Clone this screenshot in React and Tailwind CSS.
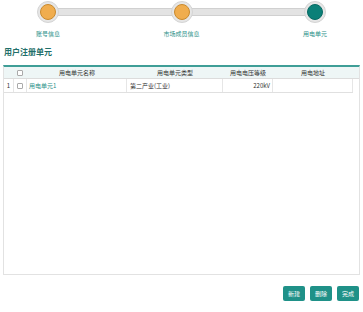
import React from 'react'

const steps = [
  { label: '账号信息', done: true },
  { label: '市场成员信息', done: true },
  { label: '用电单元', done: false },
]

const StepDot = ({ done }) => (
  <div className="w-[22px] h-[22px] rounded-full bg-[#e6e6e6] border border-[#d4d4d4] flex items-center justify-center">
    <div
      className={
        done
          ? 'w-[16px] h-[16px] rounded-full bg-[#f0ad4e] border border-[#c98a2e]'
          : 'w-[16px] h-[16px] rounded-full bg-[#0b8078] border border-[#086a63]'
      }
    />
  </div>
)

const App = () => {
  return (
    <div className="w-[363px] h-[312px] bg-white relative" style={{ fontFamily: '"Noto Sans CJK SC", "Liberation Sans", sans-serif' }}>
      {/* steps */}
      <div className="relative h-[44px]">
        <div className="absolute left-[48px] right-[50px] top-[8px] h-[8px] bg-[#e3e3e3] border-y border-[#d0d0d0]" />
        <div className="relative flex justify-between px-[27px] pt-[1px]">
          {steps.map((s) => (
            <div key={s.label} className="flex flex-col items-center w-[42px]">
              <StepDot done={s.done} />
              <div className="mt-[8px] text-[6px] leading-none text-[#2a8f88] whitespace-nowrap">{s.label}</div>
            </div>
          ))}
        </div>
      </div>

      <div className="pl-[4px] pt-[4px] text-[8px] font-bold text-[#1f6f6a] leading-none">用户注册单元</div>

      <div className="mx-[3px] mt-[9px] h-[210px] border border-[#e2e2e2] border-t-2 border-t-[#3f9e97]">
        <div className="flex h-[12px] bg-[#eef6f6] border-b border-[#dcdcdc] text-[6px] text-[#333] leading-none items-center">
          <div className="w-[9px]" />
          <div className="w-[14px] flex justify-center">
            <div className="w-[6px] h-[6px] border border-[#aaa] rounded-[1px] bg-white" />
          </div>
          <div className="w-[100px] text-center">用电单元名称</div>
          <div className="w-[96px] text-center">用电单元类型</div>
          <div className="w-[50px] text-center">用电电压等级</div>
          <div className="w-[80px] text-center">用电地址</div>
        </div>
        <div className="flex h-[14px] text-[6px] leading-none items-center border-b border-[#e0e0e0] w-[349px]">
          <div className="w-[9px] text-center text-[#333]">1</div>
          <div className="w-[14px] h-full flex justify-center items-center border-x border-[#e6e6e6]">
            <div className="w-[6px] h-[6px] border border-[#aaa] rounded-[1px] bg-white" />
          </div>
          <div className="w-[100px] h-full flex items-center pl-[2px] text-[#2a8f88] border-r border-[#e6e6e6]">用电单元1</div>
          <div className="w-[96px] h-full flex items-center pl-[3px] text-[#333] border-r border-[#e6e6e6]">第二产业(工业)</div>
          <div className="w-[50px] h-full flex items-center justify-end pr-[2px] text-[#333] border-r border-[#e6e6e6]">220kV</div>
          <div className="w-[80px] h-full border-r border-[#e6e6e6]" />
        </div>
      </div>

      <div className="flex justify-end gap-[5px] pr-[4px] mt-[11px]">
        {['新建', '删除', '完成'].map((b) => (
          <button key={b} className="w-[22px] h-[15px] rounded-[2px] bg-[#1f9188] text-white text-[6px] leading-none">
            {b}
          </button>
        ))}
      </div>
    </div>
  )
}

export default App
